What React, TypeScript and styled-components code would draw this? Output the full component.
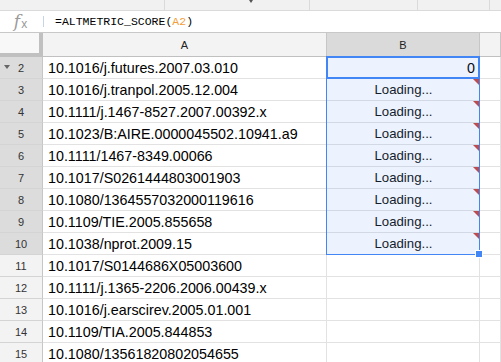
import React from "react";
import styled, { createGlobalStyle } from "styled-components";

const GlobalStyle = createGlobalStyle`
  html, body {
    margin: 0;
    padding: 0;
    background: #ffffff;
    overflow: hidden;
  }
  body {
    font-family: "Liberation Sans", Arial, sans-serif;
  }
`;

const Page = styled.div`
  width: 501px;
  height: 362px;
  overflow: hidden;
  display: flex;
  flex-direction: column;
`;

const ToolStrip = styled.div`
  height: 10px;
  flex: none;
  display: grid;
  grid-template-columns: 165px 145px 108px 72px 1fr;
  background: #f1f1f1;
  border-bottom: 1px solid #dadada;
  position: relative;
`;

const ToolSegment = styled.div`
  border-right: 1px solid #dadada;
`;

const ToolArrowTip = styled.div`
  position: absolute;
  left: 249px;
  top: 0;
  width: 0;
  height: 0;
  border-left: 2px solid transparent;
  border-right: 2px solid transparent;
  border-top: 3px solid #555;
`;

const FormulaBar = styled.div`
  height: 21px;
  flex: none;
  display: flex;
  align-items: center;
  background: #ffffff;
  border-bottom: 1px solid #c8c8c8;
`;

const FxIcon = styled.div`
  width: 43px;
  display: flex;
  align-items: center;
  justify-content: center;
  padding-right: 2px;
  box-sizing: border-box;
  color: #9a9a9a;
  font-family: "DejaVu Serif", "Liberation Serif", serif;
  font-style: italic;
  font-size: 17px;
  line-height: 1;

  span {
    font-size: 12px;
    font-style: normal;
    font-family: "Liberation Sans", sans-serif;
    margin-left: 1px;
    position: relative;
    top: 2px;
  }
`;

const BarDivider = styled.div`
  width: 1px;
  height: 11px;
  background: #c5d4e6;
  margin-right: 11px;
`;

const FormulaText = styled.div`
  font-family: "Liberation Mono", "DejaVu Sans Mono", monospace;
  font-size: 11.5px;
  color: #000;
`;

const RangeRef = styled.span`
  color: #f29d38;
`;

const Sheet = styled.div`
  flex: 1;
  display: grid;
  grid-template-columns: 43px 284px 153px 1fr;
  grid-template-rows: 24px;
  grid-auto-rows: 22px;
  align-content: start;
`;

type Place = { $row: number; $col: number };

const placed = (p: Place) => `
  grid-row: ${p.$row};
  grid-column: ${p.$col};
`;

const Corner = styled.div`
  grid-row: 1;
  grid-column: 1;
  background: #f8f8f8;
  border-right: 4px solid #c0c0c0;
  border-bottom: 4px solid #c0c0c0;
  box-sizing: border-box;
`;

const ColHeader = styled.div<Place & { $selected?: boolean }>`
  ${placed}
  background: ${(p) => (p.$selected ? "#dadada" : "#f3f3f3")};
  border-right: 1px solid #c6c6c6;
  border-bottom: 1px solid #c0c0c0;
  box-sizing: border-box;
  display: flex;
  align-items: center;
  justify-content: center;
  font-size: 11px;
  color: #222;
`;

const RowHeader = styled.div<Place & { $selected?: boolean }>`
  ${placed}
  position: relative;
  background: ${(p) => (p.$selected ? "#dcdcdc" : "#f3f3f3")};
  border-right: 1px solid #c6c6c6;
  border-bottom: 1px solid #d4d4d4;
  box-sizing: border-box;
  display: flex;
  align-items: center;
  justify-content: center;
  font-size: 11px;
  color: #333;
`;

const RowCaret = styled.div`
  position: absolute;
  left: 4px;
  top: 8px;
  width: 0;
  height: 0;
  border-left: 3px solid transparent;
  border-right: 3px solid transparent;
  border-top: 4px solid #666;
`;

const Cell = styled.div<Place & { $align?: "left" | "center" | "right" }>`
  ${placed}
  position: relative;
  border-right: 1px solid #e2e2e2;
  border-bottom: 1px solid #e2e2e2;
  box-sizing: border-box;
  display: flex;
  align-items: center;
  justify-content: ${(p) =>
    p.$align === "right" ? "flex-end" : p.$align === "center" ? "center" : "flex-start"};
  padding: 0 4px 0 5px;
  font-size: 14.3px;
  color: #000;
  white-space: nowrap;
  overflow: hidden;
`;

const LoadingText = styled.span`
  font-size: 13.2px;
  color: #111;
`;

const ErrorMark = styled.div`
  position: absolute;
  right: 0;
  top: 0;
  width: 0;
  height: 0;
  border-left: 6px solid transparent;
  border-top: 6px solid #c9463d;
`;

const Selection = styled.div<{ $row: number; $span: number }>`
  grid-column: 3;
  grid-row: ${(p) => `${p.$row} / span ${p.$span}`};
  margin: -1px 0 0 -1px;
  border: 1px solid #4285f4;
  background: rgba(66, 133, 244, 0.1);
  pointer-events: none;
  position: relative;
  z-index: 2;
`;

const ActiveCell = styled.div<{ $row: number }>`
  grid-column: 3;
  grid-row: ${(p) => p.$row};
  margin: -1px 0 0 -1px;
  border: 2px solid #4285f4;
  pointer-events: none;
  z-index: 3;
`;

const FillHandle = styled.div`
  position: absolute;
  right: -4px;
  bottom: -4px;
  width: 6px;
  height: 6px;
  background: #4285f4;
  border: 1px solid #ffffff;
`;

const dois = [
  "10.1016/j.futures.2007.03.010",
  "10.1016/j.tranpol.2005.12.004",
  "10.1111/j.1467-8527.2007.00392.x",
  "10.1023/B:AIRE.0000045502.10941.a9",
  "10.1111/1467-8349.00066",
  "10.1017/S0261444803001903",
  "10.1080/13645570320001196l6".replace("l", "1"),
  "10.1109/TIE.2005.855658",
  "10.1038/nprot.2009.15",
  "10.1017/S0144686X05003600",
  "10.1111/j.1365-2206.2006.00439.x",
  "10.1016/j.earscirev.2005.01.001",
  "10.1109/TIA.2005.844853",
  "10.1080/13561820802054655",
];

export default function App() {
  return (
    <Page>
      <GlobalStyle />
      <ToolStrip>
        <ToolSegment />
        <ToolSegment />
        <ToolSegment />
        <ToolSegment />
        <div />
        <ToolArrowTip />
      </ToolStrip>

      <FormulaBar>
        <FxIcon>
          f<span>x</span>
        </FxIcon>
        <BarDivider />
        <FormulaText>
          =ALTMETRIC_SCORE(<RangeRef>A2</RangeRef>)
        </FormulaText>
      </FormulaBar>

      <Sheet>
        <Corner />
        <ColHeader $row={1} $col={2}>A</ColHeader>
        <ColHeader $row={1} $col={3} $selected>
          B
        </ColHeader>
        <ColHeader $row={1} $col={4} />

        {dois.map((doi, i) => {
          const num = i + 2;
          const gr = i + 2;
          const inRange = num <= 10;
          return (
            <React.Fragment key={num}>
              <RowHeader $row={gr} $col={1} $selected={inRange}>
                {num === 2 && <RowCaret />}
                {num}
              </RowHeader>
              <Cell $row={gr} $col={2}>
                {doi}
              </Cell>
              {num === 2 ? (
                <Cell $row={gr} $col={3} $align="right">
                  0
                </Cell>
              ) : inRange ? (
                <Cell $row={gr} $col={3} $align="center">
                  <LoadingText>Loading...</LoadingText>
                  <ErrorMark />
                </Cell>
              ) : (
                <Cell $row={gr} $col={3} />
              )}
              <Cell $row={gr} $col={4} />
            </React.Fragment>
          );
        })}

        <Selection $row={2} $span={9}>
          <FillHandle />
        </Selection>
        <ActiveCell $row={2} />
      </Sheet>
    </Page>
  );
}
